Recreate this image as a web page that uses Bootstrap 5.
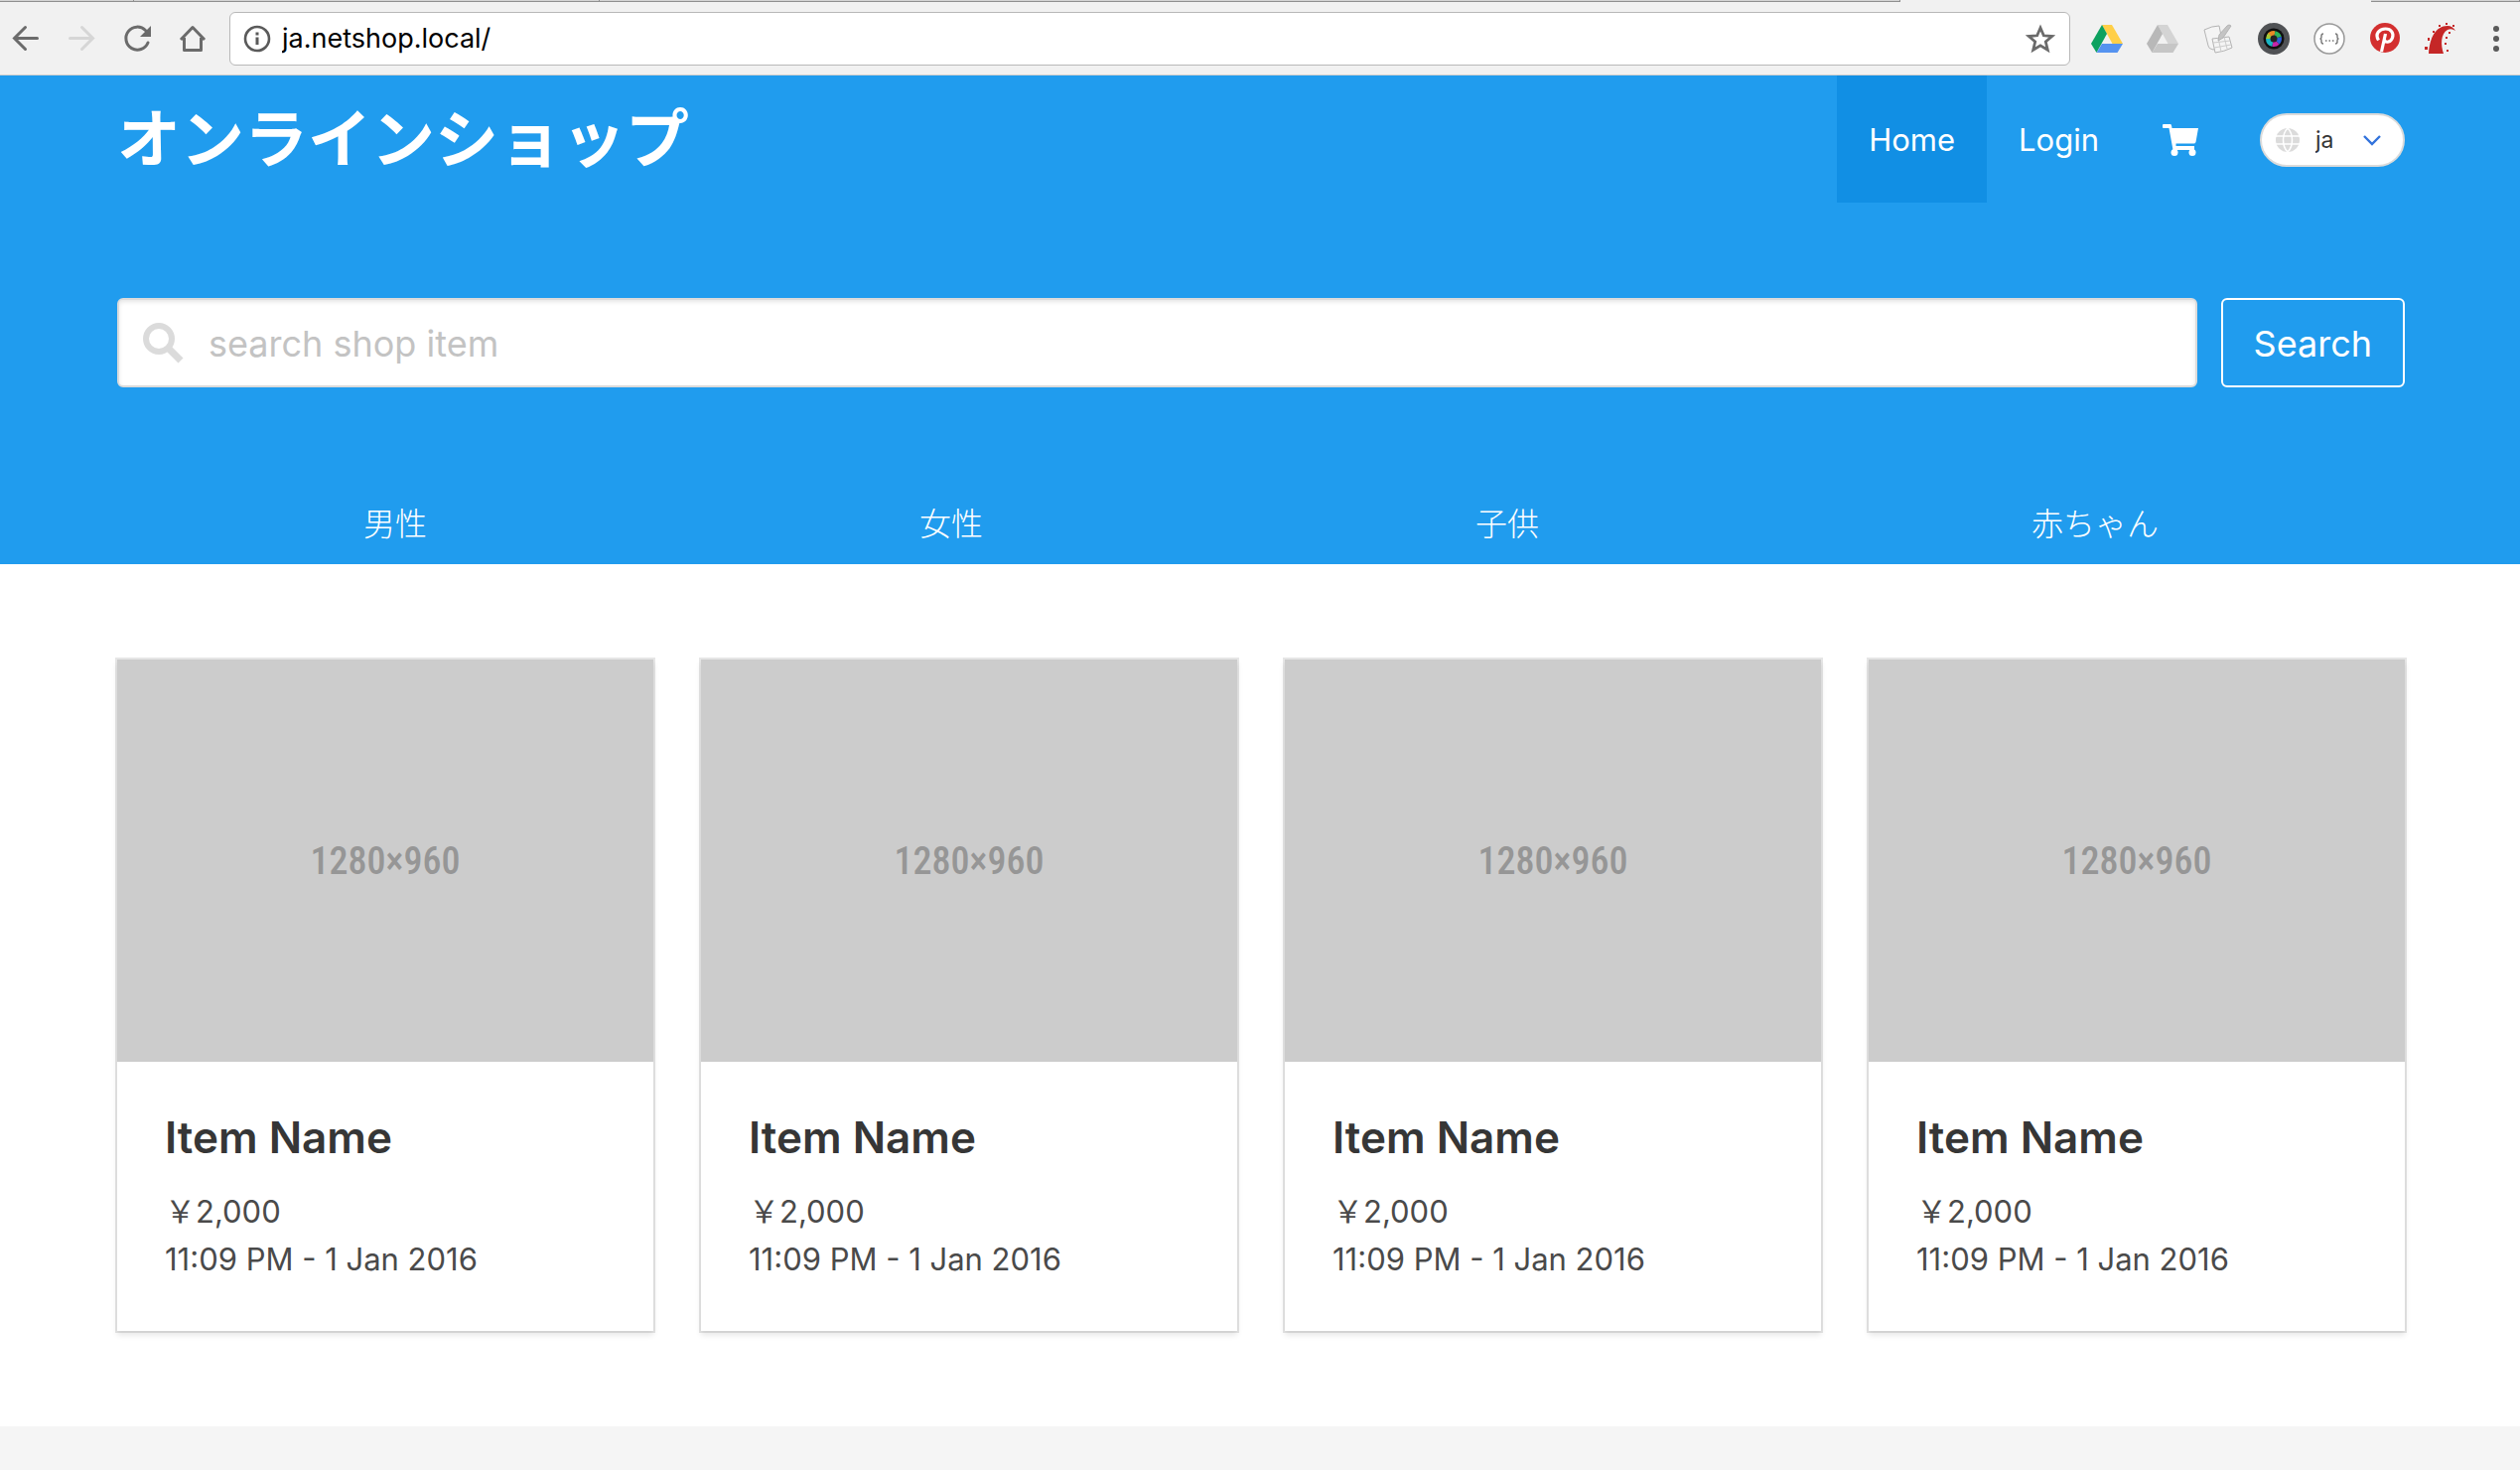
<!DOCTYPE html>
<html lang="ja">
<head>
<meta charset="utf-8">
<meta name="viewport" content="width=device-width, initial-scale=1">
<title>オンラインショップ</title>
<link href="https://cdn.jsdelivr.net/npm/bootstrap@5.3.0/dist/css/bootstrap.min.css" rel="stylesheet">
<style>
  body { font-family: Inter, "Noto Sans CJK JP", sans-serif; font-size: 31px; line-height: 48px; color: #4a4a4a; background: #f5f5f5; }
  svg { display: block; flex: none; }

  /* browser chrome */
  .tab-strip { height: 2px; background: #8f8f8f; }
  .tab-strip span { height: 2px; }
  .tab-back { background: #d4d4d4; border-bottom: 1px solid #8f8f8f; border-right: 1px solid #8f8f8f; }
  .tab-front { background: #f1f1f1; }
  .toolbar-row { height: 74px; background: #f1f1f1; border-bottom: 1px solid #d0d0d0; gap: 24px; padding: 0 8px 0 10px; }
  .tool-btn { border: 0; background: none; padding: 0; width: 32px; height: 32px; }
  .omnibox { height: 54px; background: #fff; border: 1px solid #b8b8b8; border-radius: 6px; padding: 0 14px 0 12px; margin-left: -3px; margin-right: -3px; min-width: 0; }
  .omnibox input { border: 0; outline: 0; background: none; min-width: 0; font-size: 27px; line-height: 32px; color: #000; padding: 0 0 0 10px; }

  /* hero */
  .hero-band { background: #209cee; color: #fff; }
  .page-wrap { padding-left: 118px; padding-right: 116px; }
  .top-nav { height: 128px; }
  .shop-title { font-size: 64px; line-height: 72px; font-weight: 700; color: #fff; text-decoration: none; }
  .nav-item-link { color: #fff; text-decoration: none; padding: 2px 32px 0; }
  .nav-item-link.current { background: #118fe4; }
  .lang-pill { width: 146px; height: 54px; border: 2px solid #dbdbdb; border-radius: 27px; background: #fff; padding: 0 22px 0 14px; margin: 2px 0 0 30px; }
  .lang-pill select { appearance: none; border: 0; background: none; outline: 0; font-size: 23px; line-height: 32px; color: #363636; padding: 0 0 0 16px; min-width: 0; }
  .search-row { padding-top: 96px; padding-bottom: 96px; gap: 24px; }
  .search-field { height: 90px; border: 2px solid #dbdbdb; border-radius: 6px; background: #fff; box-shadow: inset 0 2px 4px rgba(10,10,10,.1); padding-left: 24px; min-width: 0; }
  .search-field input { border: 0; outline: 0; background: none; font-size: 36px; line-height: 48px; padding: 2px 0 0 24px; min-width: 0; color: #363636; }
  .search-field input::placeholder { color: #c3c3c3; opacity: 1; }
  .search-btn { height: 90px; border: 2px solid #fff; border-radius: 6px; color: #fff; background: none; font-size: 36px; line-height: 48px; padding: 2px 31px 0; }
  .cat-tabs { height: 82px; padding-top: 2px; }
  .cat-tabs a { color: #fff; text-decoration: none; font-weight: 300; font-size: 32px; }

  /* items */
  .items-band { background: #fff; padding-top: 96px; padding-bottom: 96px; }
  .items-grid { gap: 48px; }
  .item-card { flex: 1 1 0; min-width: 0; background: #fff; box-shadow: 0 4px 6px rgba(10,10,10,.1), 0 0 0 2px rgba(10,10,10,.1); }
  .item-pic { aspect-ratio: 4 / 3; background: #ccc; color: #969696; font-family: "Roboto Condensed", Roboto, sans-serif; font-size: 38px; font-weight: 500; }
  .item-body { padding: 48px; }
  .item-name { font-size: 44px; line-height: 56px; font-weight: 600; color: #363636; margin: 0 0 23px; }
</style>
<script src="https://cdn.jsdelivr.net/npm/bootstrap@5.3.0/dist/js/bootstrap.bundle.min.js"></script>
</head>
<body>
<div class="tab-strip d-flex">
  <span class="tab-back" style="width:5.3%"></span><span class="tab-back" style="width:18.5%"></span><span class="tab-back flex-grow-1"></span><span class="tab-front" style="width:18.7%"></span><span class="tab-back" style="width:5.9%"></span>
</div>
<div class="toolbar-row d-flex align-items-center">
  <button class="tool-btn" aria-label="Back"><svg width="32" height="32" viewBox="0 0 32 32" fill="none" stroke="#6b6b6b" stroke-width="3" stroke-linecap="round"><path d="M27.500 15.500H5M15.500 4.500l-11 11 11 11"/></svg></button>
  <button class="tool-btn" aria-label="Forward"><svg width="32" height="32" viewBox="0 0 32 32" fill="none" stroke="#d6d6d6" stroke-width="3" stroke-linecap="round"><path d="M4.500 15.500H27M16.500 4.500l11 11-11 11"/></svg></button>
  <button class="tool-btn" aria-label="Reload"><svg width="32" height="32" viewBox="0 0 32 32"><path d="M24.500 7.500A11.500 11.500 0 1 0 27 20" fill="none" stroke="#6b6b6b" stroke-width="3" stroke-linecap="round"/><path d="M30 3v11H19z" fill="#6b6b6b"/></svg></button>
  <button class="tool-btn" aria-label="Home page"><svg width="32" height="32" viewBox="0 0 32 32" fill="none" stroke="#6b6b6b" stroke-width="3" stroke-linejoin="round"><path d="M4 17 16 4.500 28 17M7.500 15v12.500h17V15"/></svg></button>
  <div class="omnibox d-flex align-items-center flex-grow-1">
    <svg width="30" height="30" viewBox="0 0 30 30"><circle cx="15" cy="15" r="12" fill="none" stroke="#5a5a5a" stroke-width="2.600"/><path d="M15 13.500V21M15 8.500v3" stroke="#5a5a5a" stroke-width="3"/></svg>
    <input class="flex-grow-1" type="text" aria-label="Address" value="ja.netshop.local/">
    <svg width="30" height="30" viewBox="0 0 30 30" fill="none" stroke="#6b6b6b" stroke-width="2.800"><path d="m15 4 3.300 7.800 8.400.700-6.400 5.500 2 8.200L15 21.800l-7.300 4.400 2-8.200-6.400-5.500 8.400-.700z"/></svg>
  </div>
  <button class="tool-btn" aria-label="Drive"><svg width="32" height="32" viewBox="0 0 32 32"><path d="M11 2h10l11 19H21.500z" fill="#ffcf48"/><path d="M11 2 0 21l5.500 9L16 11z" fill="#0da15f"/><path d="M11 21h21l-5.500 9h-21z" fill="#5593f0"/></svg></button>
  <button class="tool-btn" aria-label="Drive offline"><svg width="32" height="32" viewBox="0 0 32 32"><path d="M11 2h10l11 19H21.500z" fill="#d4d4d4"/><path d="M11 2 0 21l5.500 9L16 11z" fill="#b8b8b8"/><path d="M11 21h21l-5.500 9h-21z" fill="#c6c6c6"/></svg></button>
  <button class="tool-btn" aria-label="Notes"><svg width="32" height="32" viewBox="0 0 32 32" fill="#f4f4f4" stroke="#b4b4b4"><path d="M2 7q8-4 15-4l4 20-10 4q-5-1-5-4z"/><path d="m10 16 17-2 3 11q-8 4-17 5z"/><path d="m11 20 17-2M12 25l17-3M16 15l3 14M22 14l3 12" stroke="#ccc"/><path d="M25 3q2-2 4 0l-8 12-5 3 1-6z" fill="#c4c4c4"/></svg></button>
  <button class="tool-btn" aria-label="Camera"><svg width="32" height="32" viewBox="0 0 32 32"><circle cx="16" cy="16" r="16" fill="#505255"/><circle cx="16" cy="16" r="10.500" fill="#101010"/><g fill="none" stroke-width="5"><path d="M10.500 16a5.500 5.500 0 0 1 2-4.200" stroke="#a4c93a"/><path d="M12 12.200a5.500 5.500 0 0 1 5-1.600" stroke="#e98a25"/><path d="M17 10.600a5.500 5.500 0 0 1 4.300 4" stroke="#2fb45a"/><path d="M21.300 14.600a5.500 5.500 0 0 1-1.500 5.300" stroke="#2a5fd6"/><path d="M19.800 19.900a5.500 5.500 0 0 1-5 1.400" stroke="#c626a8"/><path d="M14.800 21.300a5.500 5.500 0 0 1-4.300-5.300" stroke="#19b5c4"/></g><circle cx="16" cy="16" r="3.500" fill="#222"/></svg></button>
  <button class="tool-btn" aria-label="JSON"><svg width="32" height="32" viewBox="0 0 32 32"><circle cx="16" cy="16" r="15" fill="#fff" stroke="#999" stroke-width="1.500"/><g fill="none" stroke="#777" stroke-width="1.400"><path d="M10 11q-2 0-2 2v1.500q0 1.500-1.500 1.500Q8 16 8 17.500V19q0 2 2 2M22 11q2 0 2 2v1.500q0 1.500 1.500 1.500-1.500 0-1.500 1.500V19q0 2-2 2"/></g><path d="M12 18h1.500M15.500 18H17M19 18h1.500" stroke="#777" stroke-width="1.500"/></svg></button>
  <button class="tool-btn" aria-label="Pinterest"><svg width="32" height="32" viewBox="0 0 32 32"><circle cx="16" cy="15" r="15" fill="#d32f2f"/><path d="M9.500 17.500C5.500 11 10.500 6 16.500 6c6 0 8.500 4.500 7 9-1.500 4.500-6.500 5.500-8 2.500M16.500 11l-4 18" fill="none" stroke="#fff" stroke-width="3.200"/></svg></button>
  <button class="tool-btn" aria-label="Rails"><svg width="32" height="32" viewBox="0 0 32 32" fill="#c52727"><path d="M4 31C5 15 11 3 23 3q5 0 8 5-4-3-8-1c-7 4-7 15-4 24z"/><path d="M0 24h3v3H0zM3 15h2v3H3zM8 8h2v2H8zM14 2h2v2h-2zM21 0h2v2h-2zM28 2h2v2h-2zM24 9h2v2h-2zM21 14h2v2h-2zM20 20h2v2h-2zM22 27h2v2h-2z"/></svg></button>
  <button class="tool-btn" aria-label="Menu"><svg width="32" height="32" viewBox="0 0 32 32" fill="#5a5a5a"><circle cx="16" cy="6" r="3"/><circle cx="16" cy="16" r="3"/><circle cx="16" cy="26" r="3"/></svg></button>
</div>

<header class="hero-band">
  <nav class="top-nav page-wrap d-flex">
    <a class="shop-title d-flex align-items-center me-auto" href="#">オンラインショップ</a>
    <a class="nav-item-link current d-flex align-items-center" href="#">Home</a>
    <a class="nav-item-link d-flex align-items-center" href="#">Login</a>
    <a class="nav-item-link d-flex align-items-center" href="#" aria-label="Cart"><svg width="36" height="32" viewBox="0 0 36 32" fill="#fff"><path d="M1 0h7q1 0 1.500 4H36l-2.500 14q-.5 1.500-2 1.500H13.500V22H32v4H10.500L6.500 4H1Q0 4 0 3V1Q0 0 1 0z"/><circle cx="12" cy="28.500" r="3.500"/><circle cx="30" cy="28.500" r="3.500"/></svg></a>
    <div class="lang-pill d-flex align-items-center align-self-center">
      <svg width="24" height="24" viewBox="0 0 24 24"><circle cx="12" cy="12" r="12" fill="#dbdbdb"/><path d="M0 8h24M0 16h24M12 0C6 6 6 18 12 24M12 0c6 6 6 18 0 24" fill="none" stroke="#fff" stroke-width="1.500"/></svg>
      <select class="flex-grow-1" aria-label="Language"><option>ja</option></select>
      <svg width="18" height="12" viewBox="0 0 18 12" fill="none" stroke="#3273dc" stroke-width="2.400"><path d="m1 2 8 8 8-8"/></svg>
    </div>
  </nav>
  <form class="search-row page-wrap d-flex">
    <div class="search-field d-flex align-items-center flex-grow-1">
      <svg width="42" height="42" viewBox="0 0 42 42" fill="none" stroke="#dbdbdb"><circle cx="16" cy="17" r="13" stroke-width="6"/><path d="M26 27l12 12" stroke-width="7"/></svg>
      <input class="flex-grow-1" type="search" aria-label="Search shop item" placeholder="search shop item">
    </div>
    <button class="search-btn" type="submit">Search</button>
  </form>
  <nav class="cat-tabs page-wrap d-flex align-items-center text-center">
    <a class="flex-grow-1" href="#">男性</a><a class="flex-grow-1" href="#">女性</a><a class="flex-grow-1" href="#">子供</a><a class="flex-grow-1" href="#">赤ちゃん</a>
  </nav>
</header>

<main class="items-band page-wrap">
  <div class="items-grid d-flex">
    <article class="item-card"><div class="item-pic d-flex align-items-center justify-content-center">1280×960</div><div class="item-body"><h2 class="item-name">Item Name</h2><div>￥2,000</div><div>11:09 PM - 1 Jan 2016</div></div></article>
    <article class="item-card"><div class="item-pic d-flex align-items-center justify-content-center">1280×960</div><div class="item-body"><h2 class="item-name">Item Name</h2><div>￥2,000</div><div>11:09 PM - 1 Jan 2016</div></div></article>
    <article class="item-card"><div class="item-pic d-flex align-items-center justify-content-center">1280×960</div><div class="item-body"><h2 class="item-name">Item Name</h2><div>￥2,000</div><div>11:09 PM - 1 Jan 2016</div></div></article>
    <article class="item-card"><div class="item-pic d-flex align-items-center justify-content-center">1280×960</div><div class="item-body"><h2 class="item-name">Item Name</h2><div>￥2,000</div><div>11:09 PM - 1 Jan 2016</div></div></article>
  </div>
</main>
</body>
</html>
